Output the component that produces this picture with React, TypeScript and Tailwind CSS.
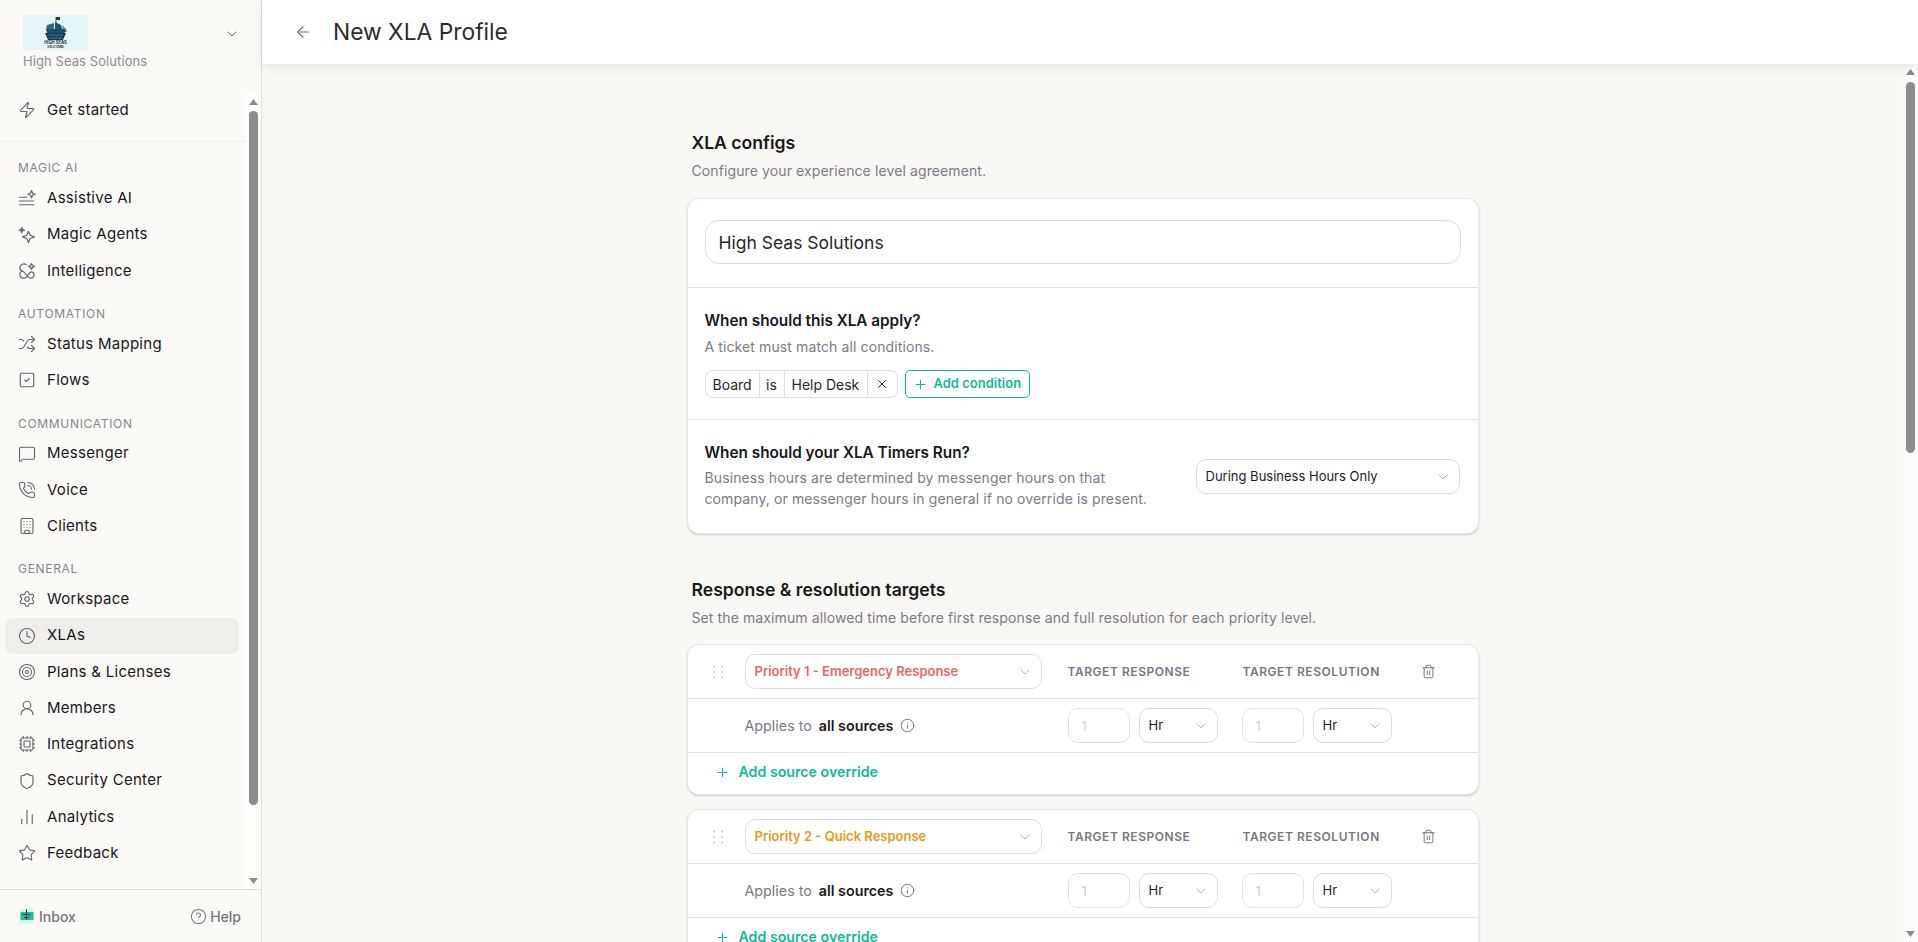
import type { ReactNode } from "react";
import {
  ArrowLeft,
  Building,
  ChartNoAxesColumn,
  ChevronDown,
  CircleHelp,
  Clock,
  Cpu,
  Info,
  MessageSquare,
  PhoneCall,
  Plus,
  Settings,
  Shield,
  Shuffle,
  SquareCheck,
  Star,
  Target,
  Trash2,
  UserRound,
  X,
  Zap,
} from "lucide-react";

const iconProps = { size: 18, strokeWidth: 1.5 };

function AssistiveIcon() {
  return (
    <svg width="18" height="18" viewBox="0 0 24 24" fill="none" stroke="currentColor" strokeWidth="1.6" strokeLinecap="round" strokeLinejoin="round">
      <path d="M2 11h10M2 16h19M2 21h19" />
      <path d="M18 2l1.400 3.600L23 7l-3.600 1.400L18 12l-1.400-3.600L13 7l3.600-1.400z" />
    </svg>
  );
}

function MagicIcon() {
  return (
    <svg width="18" height="18" viewBox="0 0 24 24" fill="none" stroke="currentColor" strokeWidth="1.6" strokeLinecap="round" strokeLinejoin="round">
      <path d="M14 7l2.200 5.300L22 14.500l-5.800 2.200L14 22l-2.200-5.300L6 14.500l5.800-2.200z" />
      <path d="M5 2l.9 2.600L8.500 5.500l-2.600.9L5 9l-.9-2.600L1.500 5.500l2.600-.9z" fill="currentColor" />
    </svg>
  );
}

function IntelligenceIcon() {
  return (
    <svg width="18" height="18" viewBox="0 0 24 24" fill="none" stroke="currentColor" strokeWidth="1.6" strokeLinecap="round" strokeLinejoin="round">
      <path d="M11 3.500C8 1.500 3 3 2.500 7c-.3 2.500 1 4.300 3.500 5-2.500.7-4 2.500-3.500 5.500C3 21 7 22.500 10 21c3-1.500 4-6 7-7.500 2.500-1 4.500 1 4.500 3.500S19 22 16.500 21.500C14 21 12.500 19 11 17c-1.500-2-3-4-5-5" />
      <path d="M18 2l1.200 2.800L22 6l-2.800 1.200L18 10l-1.200-2.800L14 6l2.800-1.200z" />
    </svg>
  );
}

function ShipLogo() {
  return (
    <div className="w-[65px] h-[35px] bg-[#e6f5f8]">
      <svg width="65" height="35" viewBox="0 0 65 35">
        <path d="M33 2v6" stroke="#1c3a52" strokeWidth="0.8" />
        <path d="M33 2h4v3h-4z" fill="#1c3a52" />
        <path d="M24 10l7-2v6h-8z" fill="#2d6d84" />
        <path d="M32 7l6 3 1 4h-7z" fill="#23566d" />
        <path d="M39 10l5 5-4 1z" fill="#3b93a8" />
        <path d="M23 14h17l4 2-3 2H24z" fill="#1f4f66" />
        <path d="M22 18h21l-3 7H25z" fill="#1c3a52" />
        <path d="M25 20h15M26 23h13" stroke="#3b93a8" strokeWidth="0.8" />
        <text x="32.500" y="29" textAnchor="middle" fontSize="4.200" fontWeight="700" fill="#17293a" fontFamily="Inter, sans-serif">HIGH SEAS</text>
        <text x="32.500" y="32.500" textAnchor="middle" fontSize="2.800" fontWeight="700" fill="#17293a" fontFamily="Inter, sans-serif">SOLUTIONS</text>
      </svg>
    </div>
  );
}

function InboxIcon() {
  return (
    <svg width="16" height="16" viewBox="0 0 16 16" fill="none">
      <rect x="1" y="1.500" width="14" height="14" fill="#d5f3ec" />
      <rect x="1.500" y="4" width="13" height="8" fill="#27b99c" />
      <path d="M7.500 1v11M3.500 6.500h8M5 9.500h5" stroke="#374151" strokeWidth="1" />
    </svg>
  );
}

// the screenshot's native scrollbars don't show up headless, so they're drawn
function ScrollTrack({ thumbClass, bg, spacer }: { thumbClass: string; bg: string; spacer: string }) {
  return (
    <div className={`flex flex-col items-center w-[15px] shrink-0 h-full ${bg}`}>
      <svg width="9" height="6" viewBox="0 0 9 6" className={`shrink-0 text-[#8c8c8c] ${spacer}`} fill="currentColor">
        <path d="M4.500 0L9 6H0z" />
      </svg>
      <div className={`w-[9px] shrink-0 rounded-full bg-[#8c8c8c] ${thumbClass}`} />
      <svg width="9" height="6" viewBox="0 0 9 6" className="shrink-0 mt-auto mb-[5px] text-[#8c8c8c]" fill="currentColor">
        <path d="M4.500 6L9 0H0z" />
      </svg>
    </div>
  );
}

interface NavItem {
  label: string;
  icon: ReactNode;
  active?: boolean;
}

const NAV_GROUPS: { title: string; items: NavItem[] }[] = [
  {
    title: "Magic AI",
    items: [
      { label: "Assistive AI", icon: <AssistiveIcon /> },
      { label: "Magic Agents", icon: <MagicIcon /> },
      { label: "Intelligence", icon: <IntelligenceIcon /> },
    ],
  },
  {
    title: "Automation",
    items: [
      { label: "Status Mapping", icon: <Shuffle {...iconProps} /> },
      { label: "Flows", icon: <SquareCheck {...iconProps} /> },
    ],
  },
  {
    title: "Communication",
    items: [
      { label: "Messenger", icon: <MessageSquare {...iconProps} /> },
      { label: "Voice", icon: <PhoneCall {...iconProps} /> },
      { label: "Clients", icon: <Building {...iconProps} /> },
    ],
  },
  {
    title: "General",
    items: [
      { label: "Workspace", icon: <Settings {...iconProps} /> },
      { label: "XLAs", icon: <Clock {...iconProps} />, active: true },
      { label: "Plans & Licenses", icon: <Target {...iconProps} /> },
      { label: "Members", icon: <UserRound {...iconProps} /> },
      { label: "Integrations", icon: <Cpu {...iconProps} /> },
      { label: "Security Center", icon: <Shield {...iconProps} /> },
      { label: "Analytics", icon: <ChartNoAxesColumn {...iconProps} /> },
      { label: "Feedback", icon: <Star {...iconProps} /> },
    ],
  },
];

function NavRow({ label, icon, active }: NavItem) {
  return (
    <div className={`flex items-center gap-[11px] h-[36.250px] ml-[5px] mr-[7px] pl-[13px] rounded-lg text-[15px] tracking-[0.28px] text-[#17171c] ${active ? "bg-[#efeeeb]" : ""}`}>
      <span className="flex w-[18px] justify-center text-[#64646c]">{icon}</span>
      <span>{label}</span>
    </div>
  );
}

function Sidebar() {
  return (
    <aside className="flex flex-col w-[262px] shrink-0 h-full bg-[#fbfaf7] border-r border-[#dfdfe2]">
      <div className="h-[92px] shrink-0 pl-[23px] pt-[15px] relative">
        <ShipLogo />
        <div className="mt-[3px] text-[13px] leading-[16px] tracking-[0.08px] text-[#8b8b93]">High Seas Solutions</div>
        <ChevronDown size={16} strokeWidth={1.5} className="absolute left-[224px] top-[26px] text-[#6b6b73]" />
      </div>
      <div className="flex flex-1 min-h-0">
        <nav className="flex-1 min-w-0 overflow-hidden">
          <NavRow label="Get started" icon={<Zap {...iconProps} />} />
          <div className="mt-[13px] border-t border-[#f0efec]" />
          {NAV_GROUPS.map((group, i) => (
            <div key={group.title} className={i === 0 ? "mt-[16px]" : "mt-[15px]"}>
              <div className="h-[20px] mb-[2px] pl-[18px] text-[12px] leading-[20px] uppercase tracking-[0.68px] text-[#85858d]">{group.title}</div>
              {group.items.map((item) => (
                <NavRow key={item.label} {...item} />
              ))}
            </div>
          ))}
        </nav>
        <ScrollTrack bg="bg-[#fdfdfc]" spacer="mt-[7px]" thumbClass="h-[694px] mt-[6px]" />
      </div>
      <div className="h-[53px] shrink-0 flex items-center justify-between pl-[19px] pr-[20px] border-t border-[#dfdfe2] text-[14px] font-medium text-[#75757d]">
        <div className="flex items-center gap-[4px]">
          <InboxIcon />
          <span>Inbox</span>
        </div>
        <div className="flex items-center gap-[3px]">
          <CircleHelp size={17} strokeWidth={1.5} />
          <span>Help</span>
        </div>
      </div>
    </aside>
  );
}

function SelectBox({ label, className, textClass }: { label: string; className: string; textClass?: string }) {
  return (
    <div className={`flex items-center justify-between bg-white border border-[#dedee0] rounded-[10px] pl-[9px] pr-[8px] ${className}`}>
      <span className={textClass ?? "text-[13px] text-[#1b1b21]"}>{label}</span>
      <ChevronDown size={16} strokeWidth={1.3} className="text-[#a8a8ae]" />
    </div>
  );
}

function TimeInput() {
  return (
    <div className="flex items-center gap-[9px]">
      <input readOnly placeholder="1" className="w-[62px] h-[35px] pl-[13px] bg-white border border-[#e2e2e4] rounded-[10px] text-[13px] placeholder:text-[#cfcfcf] outline-none" />
      <SelectBox label="Hr" className="w-[79px] h-[35px]" />
    </div>
  );
}

function PriorityCard({ label, color }: { label: string; color: string }) {
  return (
    <div className="mb-[14px] bg-white border border-[#e8e8e8] rounded-xl shadow-[0_1px_2px_rgba(0,0,0,0.18)]">
      <div className="flex items-center h-[54px] border-b border-[#e2e2e4]">
        <div className="w-[57px] pl-[22px] text-[#c9c9cb]">
          <svg width="16" height="16" viewBox="0 0 16 16" fill="currentColor">
            <circle cx="4" cy="2.500" r="1" />
            <circle cx="12" cy="2.500" r="1" />
            <circle cx="4" cy="8" r="1" />
            <circle cx="12" cy="8" r="1" />
            <circle cx="4" cy="13.500" r="1" />
            <circle cx="12" cy="13.500" r="1" />
          </svg>
        </div>
        <SelectBox label={label} className="w-[297px] h-[35px]" textClass={`text-[13px] font-semibold ${color}`} />
        <div className="ml-[26px] w-[175px] text-[12px] font-semibold tracking-[0.55px] text-[#77777f]">TARGET RESPONSE</div>
        <div className="w-[170px] text-[12px] font-semibold tracking-[0.55px] text-[#77777f]">TARGET RESOLUTION</div>
        <Trash2 size={15} strokeWidth={1.5} className="ml-[8px] text-[#6e6e76]" />
      </div>
      <div className="flex items-center h-[54px] border-b border-[#e2e2e4]">
        <div className="flex items-center w-[323px] ml-[57px] text-[14.300px]">
          <span className="text-[#7b7b85]">Applies to</span>
          <span className="ml-[7px] font-semibold text-[#1b1b21]">all sources</span>
          <Info size={15} strokeWidth={1.4} className="ml-[7px] text-[#66666e]" />
        </div>
        <TimeInput />
        <div className="ml-[24px]">
          <TimeInput />
        </div>
      </div>
      <div className="flex items-center gap-[9px] h-[41px] pb-[3px] pl-[27px] text-[14.200px] font-semibold text-[#10b99a]">
        <Plus size={15} strokeWidth={1.6} />
        <span>Add source override</span>
      </div>
    </div>
  );
}

function SectionHeading({ title, subtitle }: { title: string; subtitle: string }) {
  return (
    <div className="px-[5px]">
      <h2 className="text-[17.600px] leading-[24px] font-semibold text-[#18181b]">{title}</h2>
      <p className="mt-[5.500px] text-[14px] tracking-[0.11px] leading-[20px] text-[#7b7b85]">{subtitle}</p>
    </div>
  );
}

function ConfigCard() {
  return (
    <div className="mt-[17.500px] bg-white border border-[#e8e8e8] rounded-xl shadow-[0_1px_2px_rgba(0,0,0,0.18)]">
      <div className="h-[89px] px-[17px] pt-[21px] border-b border-[#e2e2e4]">
        <input readOnly value="High Seas Solutions" className="w-full h-[44px] px-[13px] border border-[#dedee0] rounded-[14px] text-[17.500px] text-[#27272a] outline-none" />
      </div>
      <div className="h-[132px] px-[17px] pt-[23px] border-b border-[#e2e2e4]">
        <h3 className="text-[15.300px] leading-[20px] font-semibold text-[#18181b]">When should this XLA apply?</h3>
        <p className="mt-[6px] text-[14px] tracking-[0.11px] leading-[20px] text-[#7b7b85]">A ticket must match all conditions.</p>
        <div className="flex items-center gap-[7px] mt-[13px]">
          <div className="flex items-center h-[28px] border border-[#dedee0] rounded-[8px] text-[14px] text-[#27272a] divide-x divide-[#dedee0]">
            <span className="flex items-center h-full pl-[7px] w-[54px]">Board</span>
            <span className="flex items-center justify-center h-full w-[25px]">is</span>
            <span className="flex items-center h-full pl-[7px] w-[83px]">Help Desk</span>
            <span className="flex items-center justify-center h-full w-[29px]">
              <X size={14} strokeWidth={1.7} />
            </span>
          </div>
          <div className="flex items-center gap-[6px] h-[28px] w-[125px] pl-[7px] border border-[#10b99a] rounded-[5px] text-[13px] font-semibold text-[#10b99a]">
            <Plus size={15} strokeWidth={1.6} />
            <span>Add condition</span>
          </div>
        </div>
      </div>
      <div className="flex h-[113px] pl-[17px] pr-[18px] pt-[23px]">
        <div className="flex-1">
          <h3 className="text-[15.300px] leading-[20px] font-semibold text-[#18181b]">When should your XLA Timers Run?</h3>
          <p className="mt-[5px] text-[14px] tracking-[0.11px] leading-[20.500px] text-[#7b7b85]">
            Business hours are determined by messenger hours on that
            <br />
            company, or messenger hours in general if no override is present.
          </p>
        </div>
        <SelectBox label="During Business Hours Only" className="w-[264px] h-[35px] mt-[16px]" />
      </div>
    </div>
  );
}

export default function App() {
  return (
    <div className="flex w-full h-screen overflow-hidden font-['Inter',sans-serif]">
      <Sidebar />
      <div className="flex flex-col flex-1 min-w-0 h-full bg-[#f9f8f5]">
        <header className="relative z-10 flex items-center shrink-0 h-[64px] pl-[32px] gap-[21px] bg-white shadow-[0_3px_10px_rgba(0,0,0,0.09)]">
          <ArrowLeft size={18} strokeWidth={1.5} className="text-[#6e6e76]" />
          <h1 className="text-[22.800px] text-[#2c2c30]">New XLA Profile</h1>
        </header>
        <div className="flex flex-1 min-h-0">
          <main className="flex-1 min-w-0 overflow-hidden">
            <div className="w-[792px] mx-auto pt-[67px]">
              <SectionHeading title="XLA configs" subtitle="Configure your experience level agreement." />
              <ConfigCard />
              <div className="mt-[44px]">
                <SectionHeading title="Response & resolution targets" subtitle="Set the maximum allowed time before first response and full resolution for each priority level." />
              </div>
              <div className="mt-[16.500px]">
                <PriorityCard label="Priority 1 - Emergency Response" color="text-[#e5676a]" />
                <PriorityCard label="Priority 2 - Quick Response" color="text-[#e89b1c]" />
              </div>
            </div>
          </main>
          <ScrollTrack bg="bg-[#fbfbfa]" spacer="mt-[5px]" thumbClass="h-[371px] mt-[7px]" />
        </div>
      </div>
    </div>
  );
}
